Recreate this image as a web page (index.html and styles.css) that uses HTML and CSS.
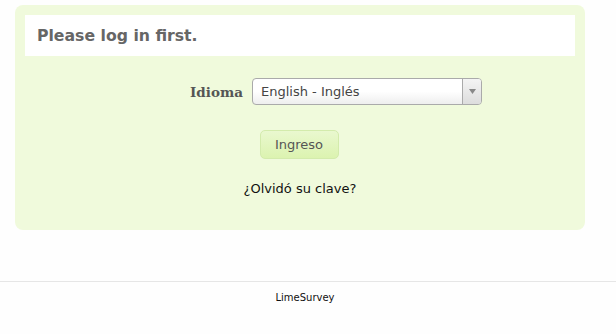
FILE: index.html
```html
<!DOCTYPE html>
<html>
<head>
<meta charset="utf-8">
<link rel="stylesheet" href="styles.css">
</head>
<body>
<div class="panel">
  <div class="header"><h2 class="title">Please log in first.</h2></div>
  <div class="row">
    <label class="label">Idioma</label>
    <div class="select">
      <span class="select-text">English - Inglés</span>
      <span class="select-arrow"><svg width="7" height="5" viewBox="0 0 7 5"><path d="M0 0H7L3.5 5Z" fill="#888"/></svg></span>
    </div>
  </div>
  <div class="actions">
    <button class="btn">Ingreso</button>
  </div>
  <div class="forgot">¿Olvidó su clave?</div>
</div>
<div class="footer">LimeSurvey</div>
</body>
</html>
```
FILE: styles.css
```css
html, body { margin: 0; padding: 0; background: #fefefe; }
body { font-family: "DejaVu Sans", Verdana, sans-serif; width: 616px; height: 334px; overflow: hidden; }
.panel {
  margin: 5px 0 0 15px;
  width: 570px;
  height: 225px;
  box-sizing: border-box;
  background: #f0fadc;
  border-radius: 8px;
  padding: 10px 10px 0 10px;
}
.header { background: #fff; height: 41px; display: flex; align-items: center; padding-left: 12px; }
.title { margin: 0; font-size: 15.7px; font-weight: bold; color: #666; }
.row { display: flex; align-items: center; margin-top: 22px; padding-left: 165px; }
.label { font-family: "DejaVu Serif", Georgia, serif; font-weight: bold; font-size: 13.5px; color: #555; width: 52px; margin-right: 10px; }
.select {
  width: 230px; height: 27px; box-sizing: border-box;
  border: 1px solid #aaa; border-radius: 4px;
  background: linear-gradient(#fff 0%, #fff 50%, #eee 100%);
  display: flex; align-items: center;
}
.select-text { flex: 1; padding-left: 8px; font-size: 13px; color: #444; }
.select-arrow { width: 18px; height: 100%; border-left: 1px solid #aaa; display: flex; align-items: center; justify-content: center; background: linear-gradient(#f4f4f4, #ddd); border-radius: 0 3px 3px 0; }
.actions { display: flex; justify-content: center; margin-top: 25px; padding-right: 2px; }
.btn {
  font-family: "DejaVu Sans", Verdana, sans-serif;
  font-size: 13px; color: #555;
  width: 79px; height: 29px;
  background: linear-gradient(#e9f8cf, #dcf3b0);
  border: 1px solid #d3ebac; border-radius: 5px;
}
.forgot { text-align: center; margin-top: 22px; font-size: 13px; color: #111; }
.footer {
  margin-top: 51px;
  border-top: 1px solid #e6e6e6;
  text-align: center;
  font-size: 10px; color: #111;
  padding-top: 10px;
  padding-right: 6px;
}
```
